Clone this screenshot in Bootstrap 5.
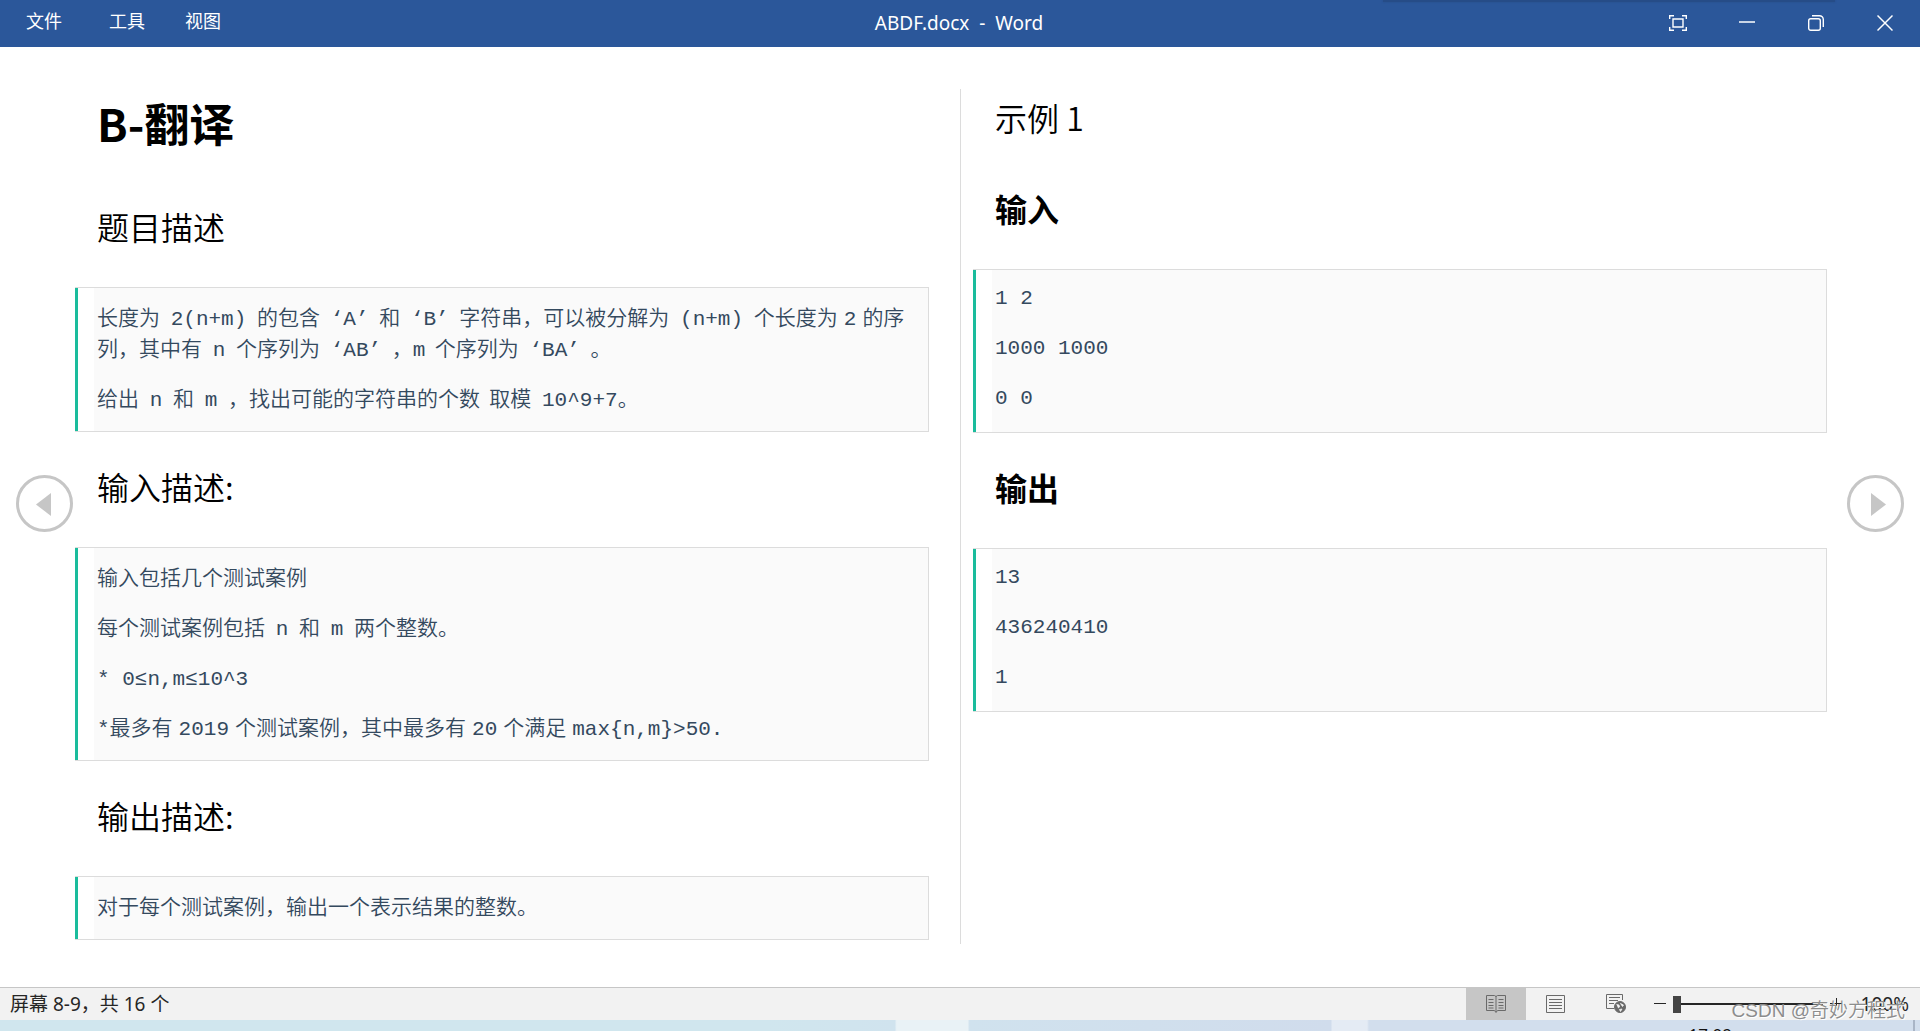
<!DOCTYPE html>
<html lang="zh-CN">
<head>
<meta charset="utf-8">
<meta name="viewport" content="width=device-width, initial-scale=1">
<title>ABDF.docx - Word</title>
<link rel="stylesheet" href="https://cdn.jsdelivr.net/npm/bootstrap@5.3.0/dist/css/bootstrap.min.css">
<style>
body { font-family: "Noto Sans", "Noto Sans CJK SC", sans-serif; color: #000; background: #fff; }
.titlebar { background: #2b579a; height: 47px; color: #fff; font-size: 18px; line-height: 24px; }
.titlebar::before { content: ""; position: absolute; top: 0; left: 1383px; width: 452px; height: 2px; background: #264c87; box-shadow: 0 0 2px #264c87; }
.titlebar .menu-btn { font-size: 18px; line-height: 24px; padding: 0; color: #fff; border: 0; }
.titlebar nav { gap: 40px; padding-left: 26px; padding-bottom: 5px; }
.titlebar .menu-btn:first-child { margin-right: 7px; }
.doc-name { font-size: 19px; left: 0; right: 0; top: 11px; pointer-events: none; white-space: pre; padding-right: 2px; }
.window-controls { padding-right: 1px; padding-bottom: 1px; }
.win-btn { width: 69px; height: 46px; padding: 0; border: 0; color: #fff; line-height: 1; }
.win-btn svg, .view-btn svg { display: block; margin: auto; }
.reader { padding: 42px 0 43px; }
.pane-left { padding: 0 31px 0 75px; }
.pane-right { padding: 4px 93px 0 12px; border-left: 1px solid #dcdcdc; }
.problem-title { font-family: "Noto Sans CJK SC", sans-serif; font-size: 45px; line-height: 60px; padding-left: 22px; margin: 4px 0 49px; font-weight: 700; }
.section-title { font-size: 32px; line-height: 48px; padding-left: 22px; margin: 0; font-family: "Noto Sans CJK SC", sans-serif; font-weight: 350; }
.section-title.strong-title { font-weight: 700; }
.quote-box { margin: 37px 0 30px; border: 1px solid #dcdcdc; border-left: 0; background: linear-gradient(90deg, #1abc9c 3px, #fff 3px, #fff 19px, #fafafa 19px); color: #34495e; font-family: "Noto Sans CJK SC", sans-serif; font-weight: 350; font-size: 21px; line-height: 31px; padding: 13px 16px 18px 22px; }
.quote-box p { margin: 0 0 19px; }
.quote-box p:last-child { margin: 0; }
.mono, .num-box { font-family: "Liberation Mono", "Noto Sans CJK SC", monospace; }
.mono { line-height: 20px; }
.mono-gap { margin: 0 6px; }
.num-box { padding: 13px 16px 18px 22px; }
.sample-title { margin-bottom: 43px; }
.turn-btn { position: absolute; top: 428px; width: 57px; height: 57px; padding: 0; border: 0; background: none; }
.turn-btn svg { display: block; }
.turn-prev { left: 16px; }
.turn-next { right: 16px; }
.statusbar { height: 33px; background: #f2f2f2; border-top: 1px solid #c6c6c6; font-size: 19px; line-height: 24px; color: #262626; }
.screen-count { padding-left: 10px; }
.view-btn { width: 60px; height: 32px; padding: 0; border: 0; border-radius: 0; }
.view-btn.active { background: #c6c6c6; }
.zoom-btn { width: 12px; height: 32px; padding: 0; border: 0; background: none; }
.zoom-btn svg { display: block; }
.zoom-range { appearance: none; -webkit-appearance: none; width: 150px; height: 18px; margin: 0 7px; background: linear-gradient(#262626, #262626) center / 100% 2px no-repeat; }
.zoom-range::-webkit-slider-thumb { -webkit-appearance: none; width: 8px; height: 17px; background: #444; border: 0; border-radius: 0; }
.zoom-value { width: 78px; padding-right: 11px; text-align: right; }
.watermark { position: absolute; right: 15px; bottom: 7px; font-size: 19px; line-height: 26px; color: #8c8c8c; font-family: "Liberation Sans", "Noto Sans CJK SC", sans-serif; font-weight: 350; text-shadow: 1px 1px 0 #fff; white-space: nowrap; }
.taskbar { height: 11px; overflow: hidden; background: linear-gradient(90deg, #d0e6ee 0 40%, #d0e3ee 46.6%, #e9f2f6 46.7% 50.4%, #d0e2ee 50.5%, #d0dcec 69.3%, #e4ebf4 69.4% 71.2%, #d2deed 71.3%); }
.taskbar time { font-size: 17px; line-height: 22px; padding-top: 4px; margin-right: 181px; color: #111; }
.taskbar .desktop-edge { width: 2px; height: 11px; margin-right: 5px; background: #a9b5c6; }
</style>
<script src="https://cdn.jsdelivr.net/npm/bootstrap@5.3.0/dist/js/bootstrap.bundle.min.js"></script>
</head>
<body class="d-flex flex-column min-vh-100 overflow-hidden">
<header class="titlebar d-flex align-items-center position-relative overflow-hidden">
  <nav class="d-flex align-items-center">
    <button type="button" class="btn menu-btn">文件</button>
    <button type="button" class="btn menu-btn">工具</button>
    <button type="button" class="btn menu-btn">视图</button>
  </nav>
  <div class="doc-name position-absolute text-center">ABDF.docx  -  Word</div>
  <div class="window-controls d-flex ms-auto">
    <button type="button" class="btn win-btn" aria-label="全屏"><svg width="18" height="18" fill="none" stroke="#fff" stroke-width="1.4"><path d="M.7 5V1.7H5M13 1.7h4.300V5M17.300 13v3.300H13M5 16.300H.7V13M4 5h10v8H4z"/></svg></button>
    <button type="button" class="btn win-btn" aria-label="最小化"><svg width="16" height="18"><path d="M0 8h16" stroke="#fff" stroke-width="1.500"/></svg></button>
    <button type="button" class="btn win-btn" aria-label="还原"><svg width="16" height="18" fill="none" stroke="#fff" stroke-width="1.400"><rect x=".7" y="4.700" width="11.600" height="11.600" rx="2"/><path d="M4 1.700h7.500a3.800 3.800 0 0 1 3.800 3.800V13"/></svg></button>
    <button type="button" class="btn win-btn" aria-label="关闭"><svg width="16" height="18"><path d="M.5 1.500l15 15M15.500 1.500l-15 15" stroke="#fff" stroke-width="1.500"/></svg></button>
  </div>
</header>

<main class="reader position-relative flex-grow-1 d-flex">
  <article class="pane-left w-50">
    <h1 class="problem-title">B-翻译</h1>
    <h2 class="section-title">题目描述</h2>
    <section class="quote-box">
      <p>长度为 <span class="mono mono-gap">2(n+m)</span> 的包含 <span class="mono mono-gap">‘A’</span> 和 <span class="mono mono-gap">‘B’</span> 字符串，可以被分解为 <span class="mono mono-gap">(n+m)</span> 个长度为<span class="mono mono-gap">2</span>的序列，其中有 <span class="mono mono-gap">n</span> 个序列为 <span class="mono mono-gap">‘AB’</span> ，<span class="mono">m</span>&nbsp; 个序列为 <span class="mono mono-gap">‘BA’</span> 。</p>
      <p>给出 <span class="mono mono-gap">n</span> 和 <span class="mono mono-gap">m</span> ，找出可能的字符串的个数&nbsp; 取模 <span class="mono mono-gap me-0">10^9+7</span>。</p>
    </section>
    <h2 class="section-title">输入描述:</h2>
    <section class="quote-box">
      <p>输入包括几个测试案例</p>
      <p>每个测试案例包括 <span class="mono mono-gap">n</span> 和 <span class="mono mono-gap">m</span> 两个整数。</p>
      <p><span class="mono">* 0≤n,m≤10^3</span></p>
      <p><span class="mono">*</span>最多有<span class="mono mono-gap">2019</span>个测试案例，其中最多有<span class="mono mono-gap">20</span>个满足<span class="mono mono-gap">max{n,m}&gt;50.</span></p>
    </section>
    <h2 class="section-title">输出描述:</h2>
    <section class="quote-box mb-0">
      <p>对于每个测试案例，输出一个表示结果的整数。</p>
    </section>
  </article>
  <article class="pane-right w-50">
    <h2 class="section-title sample-title">示例 1</h2>
    <h3 class="section-title strong-title">输入</h3>
    <section class="quote-box num-box">
      <p>1 2</p>
      <p>1000 1000</p>
      <p>0 0</p>
    </section>
    <h3 class="section-title strong-title">输出</h3>
    <section class="quote-box num-box">
      <p>13</p>
      <p>436240410</p>
      <p>1</p>
    </section>
  </article>
  <button type="button" class="turn-btn turn-prev" aria-label="上一屏"><svg width="57" height="57"><circle cx="28.500" cy="28.500" r="27" fill="#fff" stroke="#c6c6c6" stroke-width="3"/><path d="M35 18v23L20 29.500z" fill="#c6c6c6"/></svg></button>
  <button type="button" class="turn-btn turn-next" aria-label="下一屏"><svg width="57" height="57"><circle cx="28.500" cy="28.500" r="27" fill="#fff" stroke="#c6c6c6" stroke-width="3"/><path d="M24 18v23l15-11.500z" fill="#c6c6c6"/></svg></button>
</main>

<footer class="position-relative">
  <div class="statusbar d-flex align-items-center">
    <div class="screen-count">屏幕 8-9，共 16 个</div>
    <div class="d-flex align-items-center ms-auto">
      <button type="button" class="btn view-btn active" aria-label="阅读视图"><svg width="20" height="18" fill="none" stroke="#6a6a6a"><path d="M.5.5h8l1.500 1 1.500-1h8v15h-8l-1.500 2-1.500-2h-8zM10 1v16M2.500 4.500h5M2.500 7.500h5M2.500 10.500h5M2.500 13h5M12.500 4.500h5M12.500 7.500h5M12.500 10.500h5M12.500 13h5"/></svg></button>
      <button type="button" class="btn view-btn" aria-label="页面视图"><svg width="20" height="18" fill="none" stroke="#6a6a6a"><path d="M.5.5h18v17H.5zM3 4.500h13M3 7.500h13M3 10.500h13M3 13.500h13"/></svg></button>
      <button type="button" class="btn view-btn" aria-label="Web 版式"><svg width="20" height="20" fill="none" stroke="#6a6a6a"><path d="M8 14.500H.5V.5h16V6M3 3.500h11M3 6.500h9M3 9.500h5"/><circle cx="14" cy="13" r="5.500" fill="#6a6a6a"/><path d="M10.500 10.500l2.500.5.5 2-1.500 1M14.500 9.500l3 1.500-1 1.500zM13.500 15.500l2.500-.5-1.500 2.500z" fill="#f2f2f2" stroke="#f2f2f2" stroke-width=".8"/></svg></button>
      <button type="button" class="zoom-btn ms-2" aria-label="缩小"><svg width="12" height="32"><path d="M0 15.500h12" stroke="#262626"/></svg></button>
      <input type="range" class="zoom-range" aria-label="缩放" min="100" max="300" value="100">
      <button type="button" class="zoom-btn" aria-label="放大"><svg width="12" height="32"><path d="M0 15.500h12M6.500 10v11" stroke="#262626"/></svg></button>
      <div class="zoom-value">100%</div>
    </div>
  </div>
  <div class="taskbar d-flex justify-content-end"><time>17:09</time><div class="desktop-edge"></div></div>
  <div class="watermark">CSDN @奇妙方程式</div>
</footer>
</body>
</html>
